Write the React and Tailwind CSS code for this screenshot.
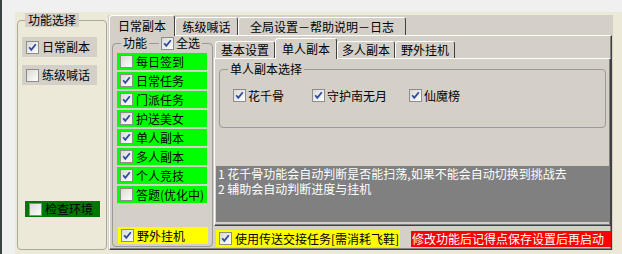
import React from 'react';

const Check = ({ on }) => (
  <svg width="13" height="13" viewBox="0 0 13 13" className="shrink-0">
    <defs>
      <linearGradient id="cbg" x1="0" y1="0" x2="1" y2="1">
        <stop offset="0" stopColor="#d8d8d2" />
        <stop offset="1" stopColor="#ffffff" />
      </linearGradient>
    </defs>
    <rect x="0.5" y="0.5" width="12" height="12" fill="url(#cbg)" stroke="#8d8e8c" />
    {on && <path d="M3.2 6.2 L5.3 8.8 L9.8 3.3" stroke="#2d4aa2" strokeWidth="1.8" fill="none" />}
  </svg>
);

const Tab = ({ label, w, active }) => (
  <div
    className={`${w} ${active ? 'relative z-10 -mb-[1px] h-[21px]' : 'h-[18px]'} bg-[#d4d0c8] border-t border-l border-white border-r border-r-[#404040] rounded-t-[3px] flex items-center justify-center whitespace-nowrap`}
  >
    {label}
  </div>
);

const InnerTab = ({ label, w, active }) => (
  <div
    className={`${w} ${active ? 'relative z-10 -mb-[1px] h-[21px]' : 'h-[17px]'} bg-[#d4d0c8] border-t border-l border-white border-r border-r-[#404040] rounded-t-[3px] flex items-center justify-center whitespace-nowrap`}
  >
    {label}
  </div>
);

const GreenRow = ({ label, on }) => (
  <div className="w-[90px] h-[17px] bg-[#00ff00] flex items-center pl-[3px] gap-[3px] whitespace-nowrap">
    <Check on={on} />
    <span>{label}</span>
  </div>
);

const tasks = [
  ['每日签到', false],
  ['日常任务', true],
  ['门派任务', true],
  ['护送美女', true],
  ['单人副本', true],
  ['多人副本', true],
  ['个人竞技', true],
  ['答题(优化中)', false],
];

export default function App() {
  return (
    <div className="w-[622px] h-[254px] overflow-hidden flex bg-[#f0f0f0] border-l-2 border-[#3b4540] pt-[12px] pl-[13px] text-[12px] leading-[14px] text-black font-['Noto_Sans_CJK_SC','Liberation_Sans',sans-serif]">
      <div className="flex-1 flex items-start bg-[#ece9d8] pl-[2px]">
        {/* 左侧 功能选择 */}
        <fieldset className="w-[90px] h-[237px] mt-[1px] border border-[#a9a89c] rounded-[4px] px-[4px]">
          <legend className="ml-[3px] px-[3px] h-[14px] bg-[#d4d0c8]">功能选择</legend>
          <div className="mt-[10px] w-[75px] h-[20px] bg-[#d4d0c8] flex items-center pl-[4px] gap-[3px]">
            <Check on />
            <span>日常副本</span>
          </div>
          <div className="mt-[8px] w-[75px] h-[20px] bg-[#d4d0c8] flex items-center pl-[4px] gap-[3px]">
            <Check />
            <span>练级喊话</span>
          </div>
          <div className="mt-[116px] ml-[3px] w-[75px] h-[16px] bg-[#007800] flex items-center pl-[4px] gap-[3px]">
            <Check />
            <span>检查环境</span>
          </div>
        </fieldset>

        {/* 主选项卡 */}
        <div className="ml-[1px] mt-[3px] w-[505px] h-[235px] bg-[#d4d0c8] flex flex-col">
          <div className="flex items-end h-[20px] pl-[1px]">
            <Tab label="日常副本" w="w-[66px]" active />
            <Tab label="练级喊话" w="w-[63px]" />
            <Tab label="全局设置－帮助说明－日志" w="w-[168px]" />
          </div>
          <div className="ml-[1px] w-[503px] h-[215px] border border-white border-r-[#404040] border-b-[#404040] shadow-[inset_-1px_-1px_0_#808080] flex items-start">
            {/* 功能 */}
            <fieldset className="ml-[2px] w-[99px] h-[211px] border border-[#9a9a9a] rounded-[4px] px-[4px]">
              <legend className="ml-[4px] h-[14px]">
                <div className="flex items-center h-[14px]">
                  <span className="px-[2px]">功能</span>
                  <span className="w-[10px] h-px bg-[#9a9a9a]" />
                  <span className="flex items-center gap-[2px] px-[2px]">
                    <Check on />
                    <span>全选</span>
                  </span>
                </div>
              </legend>
              <div className="mt-[3px] flex flex-col gap-[2px]">
                {tasks.map(([t, on]) => (
                  <GreenRow key={t} label={t} on={on} />
                ))}
              </div>
              <div className="mt-[24px] ml-[1px] w-[90px] h-[17px] bg-[#ffff00] flex items-center pl-[3px] gap-[3px]">
                <Check on />
                <span>野外挂机</span>
              </div>
            </fieldset>

            {/* 右侧 */}
            <div className="ml-[1px] w-[397px] flex flex-col">
              <div className="mt-[2px] flex items-end h-[20px] pl-[1px]">
                <InnerTab label="基本设置" w="w-[60px]" />
                <InnerTab label="单人副本" w="w-[62px]" active />
                <InnerTab label="多人副本" w="w-[58px]" />
                <InnerTab label="野外挂机" w="w-[60px]" />
              </div>
              <div className="w-[397px] h-[168px] border border-white border-r-[#404040] border-b-[#404040] shadow-[inset_-1px_-1px_0_#808080] flex flex-col">
                <fieldset className="ml-[4px] mt-[3px] w-[387px] h-[66px] border border-[#9a9a9a] rounded-[4px] px-[4px]">
                  <legend className="ml-[4px] px-[2px] h-[15px]">单人副本选择</legend>
                  <div className="mt-[11px] flex items-center h-[15px] pl-[9px]">
                    <div className="w-[79px] flex items-center gap-[2px]">
                      <Check on />
                      <span>花千骨</span>
                    </div>
                    <div className="w-[97px] flex items-center gap-[2px]">
                      <Check on />
                      <span>守护南无月</span>
                    </div>
                    <div className="flex items-center gap-[2px]">
                      <Check on />
                      <span>仙魔榜</span>
                    </div>
                  </div>
                </fieldset>
                <div className="ml-[1px] mt-[38px] w-[393px] h-[56px] bg-[#808080] text-white pl-[2px] leading-[15px] whitespace-nowrap">
                  <div>1 花千骨功能会自动判断是否能扫荡,如果不能会自动切换到挑战去</div>
                  <div>2 辅助会自动判断进度与挂机</div>
                </div>
              </div>
              <div className="mt-[4px] flex items-start">
                <div className="ml-[2px] w-[184px] h-[17px] bg-[#ffff00] flex items-center pl-[3px] gap-[3px] whitespace-nowrap">
                  <Check on />
                  <span>使用传送交接任务[需消耗飞鞋]</span>
                </div>
                <div className="ml-[11px] mt-[1px] w-[200px] h-[16px] bg-[#ff0000] text-white flex items-center pl-[1px] whitespace-nowrap">
                  修改功能后记得点保存设置后再启动
                </div>
              </div>
            </div>
          </div>
        </div>
      </div>
    </div>
  );
}
